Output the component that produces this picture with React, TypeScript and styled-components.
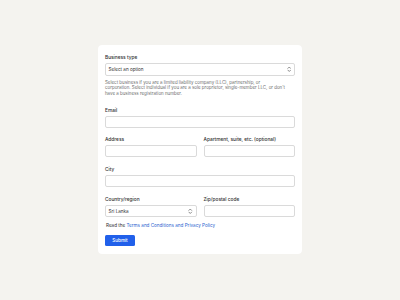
import React from "react";
import styled, { createGlobalStyle } from "styled-components";

const Global = createGlobalStyle`
  html, body { margin: 0; padding: 0; background: #f4f3ef; }
  body { font-family: Inter, "Noto Sans", sans-serif; -webkit-font-smoothing: antialiased; }
  * { box-sizing: border-box; }
`;

const Page = styled.div`
  width: 400px;
  height: 300px;
  display: flex;
  justify-content: center;
  padding-top: 45px;
`;

const Card = styled.form`
  width: 204px;
  height: 209px;
  background: #ffffff;
  border-radius: 4px;
  box-shadow: 0 0 1px rgba(0, 0, 0, 0.03);
  padding: 9px 7px 8px 7px;
  display: flex;
  flex-direction: column;
`;

const Field = styled.div<{ $mt?: number; $fixed?: boolean }>`
  display: flex;
  flex-direction: column;
  margin-top: ${(p) => p.$mt ?? 0}px;
  min-width: 0;
  flex: ${(p) => (p.$fixed ? "none" : "1")};
`;

const Row = styled.div<{ $mt?: number }>`
  display: flex;
  gap: 7px;
  margin-top: ${(p) => p.$mt ?? 0}px;
`;

const Label = styled.label`
  font-size: 4.8px;
  line-height: 6px;
  font-weight: 500;
  color: #303030;
  margin-bottom: 3px;
  white-space: nowrap;
`;

const Input = styled.div`
  height: 12px;
  border: 0.6px solid #dadada;
  border-radius: 2px;
  background: #ffffff;
`;

const Select = styled.div`
  height: 12.5px;
  border: 0.6px solid #dadada;
  border-radius: 2px;
  background: #ffffff;
  display: flex;
  align-items: center;
  justify-content: space-between;
  padding: 0 3px 0 2.5px;
  font-size: 4.6px;
  color: #303030;
`;

const Help = styled.p`
  margin: 4px 0 0 0;
  max-width: 186px;
  font-size: 4.45px;
  line-height: 5.8px;
  color: #6e6e6e;
`;

const Terms = styled.p`
  margin: 5.5px 0 0 0;
  font-size: 4.6px;
  line-height: 6px;
  color: #303030;
  padding-left: 1px;
`;

const Link = styled.a`
  color: #2c5fcf;
  text-decoration: none;
`;

const Button = styled.button`
  margin-top: 6px;
  align-self: flex-start;
  width: 30px;
  height: 12px;
  background: #2160ea;
  border: none;
  border-radius: 1.5px;
  color: #ffffff;
  font-family: inherit;
  font-size: 4.6px;
  font-weight: 500;
  padding: 0;
`;

const Chevron = () => (
  <svg width="4.5" height="6.5" viewBox="0 0 8 12" fill="none" stroke="#5c5c5c" strokeWidth="1.3" strokeLinecap="round" strokeLinejoin="round">
    <path d="M1.5 4.4 L4 1.9 L6.5 4.4" />
    <path d="M1.5 7.6 L4 10.1 L6.5 7.6" />
  </svg>
);

export default function App() {
  return (
    <Page>
      <Global />
      <Card onSubmit={(e) => e.preventDefault()}>
        <Field $fixed>
          <Label>Business type</Label>
          <Select>
            <span>Select an option</span>
            <Chevron />
          </Select>
          <Help>
            Select business if you are a limited liability company (LLC), partnership, or
            <br />
            corporation. Select individual if you are a sole proprietor, single-member LLC, or don't have a business registration number.
          </Help>
        </Field>
        <Field $mt={10} $fixed>
          <Label>Email</Label>
          <Input />
        </Field>
        <Row $mt={8}>
          <Field>
            <Label>Address</Label>
            <Input />
          </Field>
          <Field>
            <Label>Apartment, suite, etc. (optional)</Label>
            <Input />
          </Field>
        </Row>
        <Field $mt={9} $fixed>
          <Label>City</Label>
          <Input />
        </Field>
        <Row $mt={9}>
          <Field>
            <Label>Country/region</Label>
            <Select>
              <span>Sri Lanka</span>
              <Chevron />
            </Select>
          </Field>
          <Field>
            <Label>Zip/postal code</Label>
            <Input />
          </Field>
        </Row>
        <Terms>
          Read the <Link href="#">Terms and Conditions and Privacy Policy</Link>
        </Terms>
        <Button type="submit">Submit</Button>
      </Card>
    </Page>
  );
}
